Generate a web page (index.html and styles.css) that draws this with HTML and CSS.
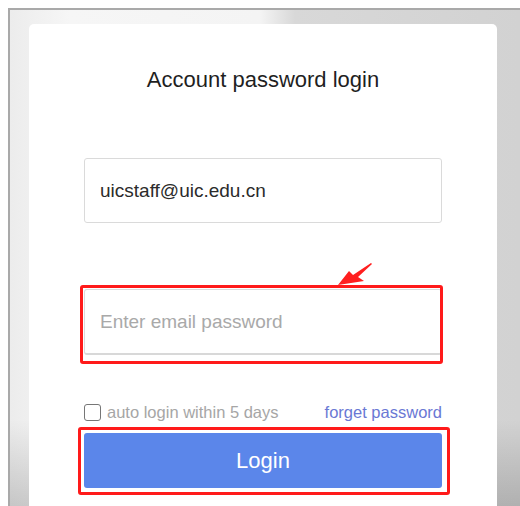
FILE: index.html
```html
<!DOCTYPE html>
<html lang="en">
<head>
<meta charset="utf-8">
<title>Account password login</title>
<link rel="stylesheet" href="styles.css">
</head>
<body>
<div class="frame">
  <div class="card">
    <h1 class="title">Account password login</h1>
    <form class="login-form">
      <div class="field">
        <input class="text-input" type="text" value="uicstaff@uic.edu.cn">
      </div>
      <div class="field field-password">
        <input class="text-input" type="password" placeholder="Enter email password">
        <span class="mark mark-password"></span>
        <svg class="pointer" width="40" height="30" viewBox="0 0 40 30">
          <path d="M35 1 L36 2 L22 15 L28 19 L2 23 L13 9 L17 13 Z" fill="#ff1f1f"/>
        </svg>
      </div>
      <div class="options">
        <label class="remember">
          <span class="check"></span>
          <span>auto login within 5 days</span>
        </label>
        <a class="forget" href="#">forget password</a>
      </div>
      <div class="field field-submit">
        <button class="submit" type="button">Login</button>
        <span class="mark mark-submit"></span>
      </div>
    </form>
  </div>
</div>
</body>
</html>
```

FILE: styles.css
```css
html, body {
  margin: 0;
  padding: 0;
  height: 506px;
  background: #ffffff;
  overflow: hidden;
}

body {
  font-family: "Liberation Sans", Arial, sans-serif;
}

.frame {
  box-sizing: border-box;
  display: flex;
  flex-direction: column;
  margin: 8px 0 0 8px;
  height: 498px;
  border-top: 2px solid #a9a9a9;
  border-left: 2px solid #a9a9a9;
  padding: 14px 0 0 19px;
  overflow: hidden;
  background:
    linear-gradient(to bottom, rgba(0,0,0,0) 0, rgba(0,0,0,0) 410px, rgba(0,0,0,0.16) 100%),
    linear-gradient(to right, #ececec 0, #f6f6f6 60px, #f4f4f4 250px, #d8d8d8 285px, #d2d2d2 100%);
}

.card {
  box-sizing: border-box;
  flex: 1;
  width: 468px;
  background: #ffffff;
  border-radius: 5px 5px 0 0;
  padding: 42px 55px 0 55px;
  overflow: hidden;
}

.title {
  margin: 0;
  font-size: 22px;
  line-height: 28px;
  font-weight: normal;
  color: #1f1f1f;
  text-align: center;
}

.login-form {
  display: flex;
  flex-direction: column;
  margin-top: 64px;
}

.field {
  position: relative;
  display: flex;
}

.text-input {
  box-sizing: border-box;
  width: 358px;
  height: 65px;
  padding: 0 15px;
  border: 1px solid #dadada;
  border-radius: 3px;
  font-family: "Liberation Sans", Arial, sans-serif;
  font-size: 19px;
  color: #2b2b2b;
  background: #ffffff;
  outline: none;
}

.text-input::placeholder {
  color: #a9a9a9;
}

.field-password {
  margin-top: 66px;
}

.field-password .text-input {
  height: 66px;
  border-bottom: 2px solid #d8d8d8;
}

.mark {
  position: absolute;
  border: 3px solid #ff1a1a;
  border-radius: 3px;
  pointer-events: none;
}

.mark-password {
  left: -4px;
  top: -4px;
  width: 357px;
  height: 73px;
}

.pointer {
  position: absolute;
  left: 252px;
  top: -27px;
}

.options {
  display: flex;
  justify-content: space-between;
  align-items: center;
  margin-top: 48px;
  height: 18px;
  font-size: 16.5px;
}

.remember {
  display: flex;
  align-items: center;
  gap: 6px;
  color: #a6a6a6;
}

.check {
  box-sizing: border-box;
  width: 17px;
  height: 17px;
  border: 1px solid #767676;
  border-radius: 3px;
  background: #ffffff;
}

.forget {
  color: #6a78d4;
  text-decoration: none;
}

.field-submit {
  margin-top: 12px;
}

.submit {
  width: 358px;
  height: 55px;
  border: none;
  border-radius: 3px;
  background: #5b86ea;
  color: #ffffff;
  font-family: "Liberation Sans", Arial, sans-serif;
  font-size: 22px;
}

.mark-submit {
  left: -6px;
  top: -6px;
  width: 366px;
  height: 62px;
}
```
